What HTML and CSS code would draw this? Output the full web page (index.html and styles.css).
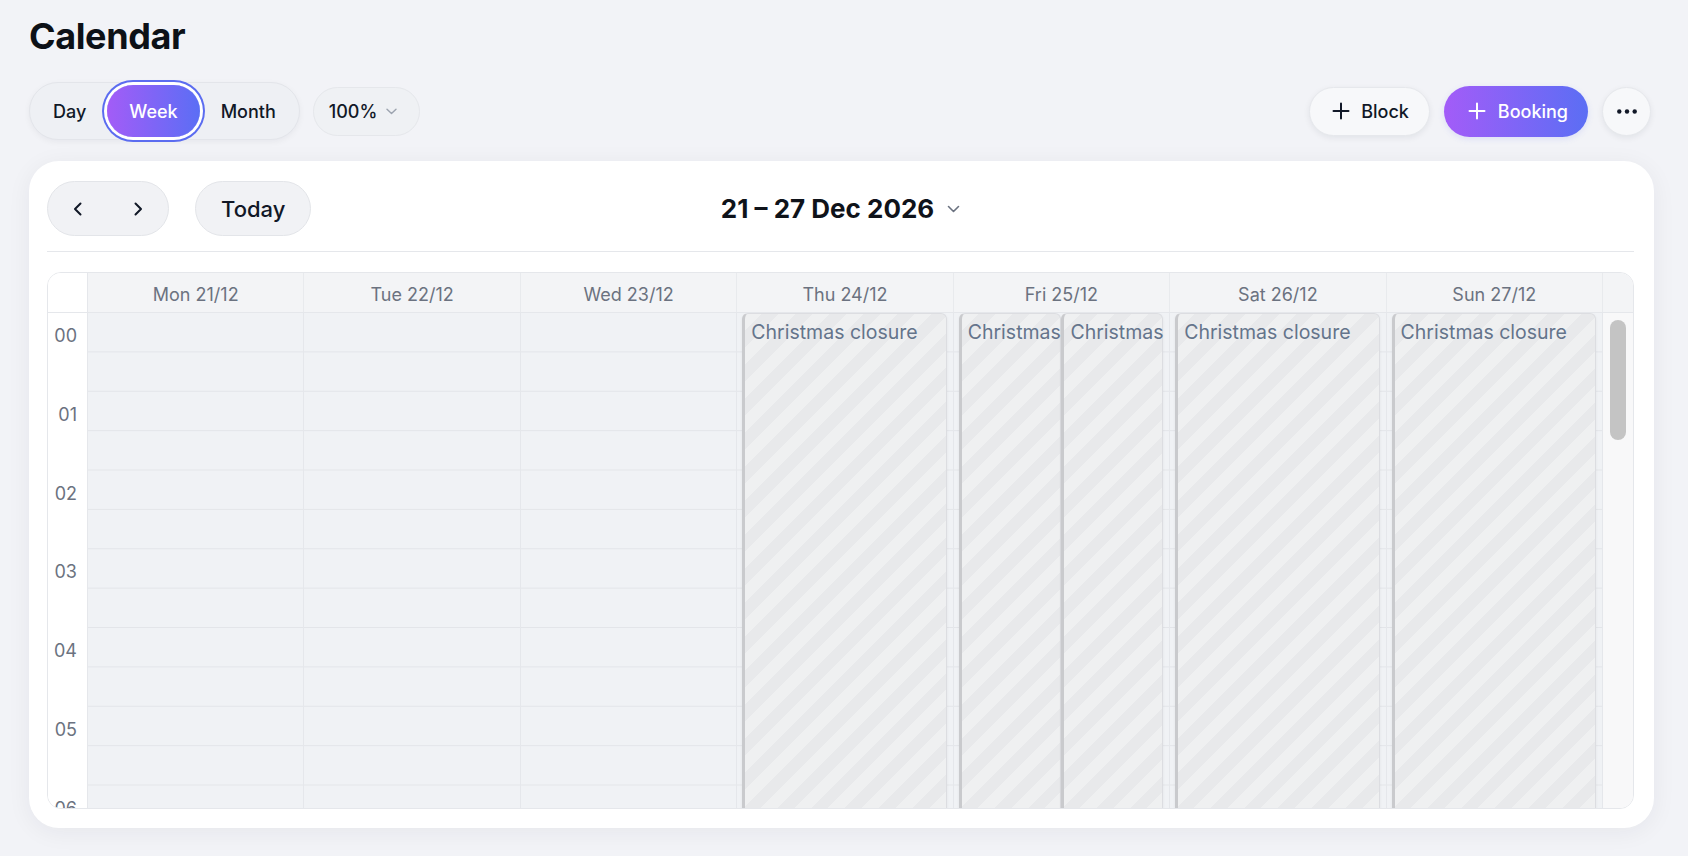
FILE: index.html
```html
<!DOCTYPE html>
<html lang="en">
<head>
  <meta charset="UTF-8">
  <meta name="viewport" content="width=device-width, initial-scale=1.0">
  <title>Calendar</title>
  <link rel="stylesheet" href="styles.css">
</head>
<body>
  <h1>Calendar</h1>

  <div class="toolbar">
    <div class="left-tools">
      <div class="view-switch">
        <button class="view-btn">Day</button>
        <button class="view-btn active">Week</button>
        <button class="view-btn">Month</button>
      </div>
      <button class="zoom-btn">100%
        <svg width="11" height="7" viewBox="0 0 11 7"><path d="M1 1.2 L5.5 5.5 L10 1.2" fill="none" stroke="#9ca3af" stroke-width="1.4" stroke-linecap="round" stroke-linejoin="round"/></svg>
      </button>
    </div>
    <div class="right-tools">
      <button class="block-btn">
        <svg width="18" height="18" viewBox="0 0 18 18"><path d="M9 1.5v15M1.5 9h15" stroke="#111827" stroke-width="2" stroke-linecap="round"/></svg>
        Block
      </button>
      <button class="booking-btn">
        <svg width="18" height="18" viewBox="0 0 18 18"><path d="M9 1.5v15M1.5 9h15" stroke="#fff" stroke-width="2" stroke-linecap="round"/></svg>
        Booking
      </button>
      <button class="more-btn">
        <svg width="20" height="5" viewBox="0 0 20 5"><circle cx="2.3" cy="2.5" r="2.2"/><circle cx="10" cy="2.5" r="2.2"/><circle cx="17.7" cy="2.5" r="2.2"/></svg>
      </button>
    </div>
  </div>

  <div class="card">
    <div class="card-head">
      <div class="head-left">
        <div class="nav-pill">
          <button class="nav-btn"><svg width="10" height="14" viewBox="0 0 10 14"><path d="M7.5 1.5 L2 7 L7.5 12.5" fill="none" stroke="#111827" stroke-width="2" stroke-linecap="round" stroke-linejoin="round"/></svg></button>
          <button class="nav-btn"><svg width="10" height="14" viewBox="0 0 10 14"><path d="M2.5 1.5 L8 7 L2.5 12.5" fill="none" stroke="#111827" stroke-width="2" stroke-linecap="round" stroke-linejoin="round"/></svg></button>
        </div>
        <button class="today-btn">Today</button>
      </div>
      <button class="range-title">21 – 27 Dec 2026
        <svg width="13" height="8" viewBox="0 0 13 8"><path d="M1.5 1.5 L6.5 6.5 L11.5 1.5" fill="none" stroke="#6b7280" stroke-width="1.6" stroke-linecap="round" stroke-linejoin="round"/></svg>
      </button>
      <div></div>
    </div>

    <div class="grid">
      <div class="grid-head">
        <div class="corner"></div>
        <div class="day-name">Mon 21/12</div>
        <div class="day-name">Tue 22/12</div>
        <div class="day-name">Wed 23/12</div>
        <div class="day-name">Thu 24/12</div>
        <div class="day-name">Fri 25/12</div>
        <div class="day-name">Sat 26/12</div>
        <div class="day-name">Sun 27/12</div>
      </div>
      <div class="grid-body">
        <div class="scroll-area">
          <div class="times">
            <div class="hour">00</div><div class="hour">01</div><div class="hour">02</div><div class="hour">03</div>
            <div class="hour">04</div><div class="hour">05</div><div class="hour">06</div><div class="hour">07</div>
            <div class="hour">08</div><div class="hour">09</div><div class="hour">10</div><div class="hour">11</div>
            <div class="hour">12</div><div class="hour">13</div><div class="hour">14</div><div class="hour">15</div>
            <div class="hour">16</div><div class="hour">17</div><div class="hour">18</div><div class="hour">19</div>
            <div class="hour">20</div><div class="hour">21</div><div class="hour">22</div><div class="hour">23</div>
          </div>
          <div class="day"></div>
          <div class="day"></div>
          <div class="day"></div>
          <div class="day">
            <div class="closure">Christmas closure</div>
          </div>
          <div class="day">
            <div class="closure first-half">Christmas closure</div>
            <div class="closure second-half">Christmas Day</div>
          </div>
          <div class="day">
            <div class="closure">Christmas closure</div>
          </div>
          <div class="day">
            <div class="closure">Christmas closure</div>
          </div>
        </div>
        <div class="scroll-rail">
          <div class="scroll-thumb"></div>
        </div>
      </div>
    </div>
  </div>
</body>
</html>
```

FILE: styles.css
```css
body {
  margin: 0;
  height: 100vh;
  box-sizing: border-box;
  padding: 14px 34px 28px 29px;
  background-color: #f2f3f7;
  font-family: Inter, "Noto Sans", sans-serif;
  color: #111827;
  display: flex;
  flex-direction: column;
}
button {
  font-family: inherit;
  cursor: pointer;
}
h1 {
  margin: 0;
  font-size: 36px;
  line-height: 44px;
  font-weight: 700;
  letter-spacing: -0.4px;
  color: #0d1117;
}

/* top toolbar */
.toolbar {
  display: flex;
  justify-content: space-between;
  align-items: center;
  margin-top: 24px;
}
.left-tools {
  display: flex;
  align-items: center;
  gap: 13px;
}
.view-switch {
  display: flex;
  padding: 2px;
  border: 1px solid #e3e5ea;
  border-radius: 999px;
  background-color: #eef0f4;
  box-shadow: 0 2px 6px rgba(15, 23, 42, 0.05);
}
.view-btn {
  height: 52px;
  padding: 0 21px;
  border: none;
  border-radius: 999px;
  background: none;
  font-size: 18px;
  font-weight: 500;
  color: #111827;
}
.view-btn.active {
  padding: 0 22px;
  background: linear-gradient(90deg, #a35cf7, #5b6ef5);
  color: #fff;
  box-shadow: 0 0 0 3px #fff, 0 0 0 5px #5b6cf0;
}
.zoom-btn {
  display: flex;
  align-items: center;
  gap: 9px;
  height: 49px;
  padding: 0 22px 0 15px;
  border: 1px solid #e5e7eb;
  border-radius: 999px;
  background-color: #eff1f4;
  font-size: 18px;
  font-weight: 500;
  color: #111827;
}
.right-tools {
  display: flex;
  align-items: center;
  gap: 14px;
  padding-right: 3px;
}
.block-btn,
.booking-btn {
  display: flex;
  align-items: center;
  border-radius: 999px;
  font-size: 18px;
  font-weight: 500;
}
.block-btn {
  gap: 11px;
  height: 49px;
  padding: 0 20px 0 22px;
  border: 1px solid #e6e8ec;
  background-color: #f7f8fa;
  color: #111827;
  box-shadow: 0 2px 6px rgba(15, 23, 42, 0.07);
}
.booking-btn {
  gap: 12px;
  height: 51px;
  padding: 0 20px 0 24px;
  border: none;
  background: linear-gradient(90deg, #a35cf8, #5b6ef4);
  color: #fff;
  box-shadow: 0 2px 6px rgba(91, 110, 244, 0.15);
}
.more-btn {
  width: 49px;
  height: 49px;
  padding: 0;
  display: flex;
  align-items: center;
  justify-content: center;
  border: 1px solid #e6e8ec;
  border-radius: 50%;
  background-color: #f7f8fa;
  fill: #111827;
  box-shadow: 0 2px 6px rgba(15, 23, 42, 0.07);
}

/* calendar card */
.card {
  flex: 1;
  min-height: 0;
  margin-top: 21px;
  padding: 20px 20px 19px 18px;
  background-color: #fff;
  border-radius: 30px;
  box-shadow: 0 4px 24px rgba(30, 41, 59, 0.06);
  display: flex;
  flex-direction: column;
}
.card-head {
  display: grid;
  grid-template-columns: 1fr auto 1fr;
  align-items: center;
  padding-bottom: 15px;
  border-bottom: 1px solid #e5e7eb;
}
.head-left {
  display: flex;
  align-items: center;
  gap: 26px;
}
.nav-pill {
  display: flex;
  height: 55px;
  box-sizing: border-box;
  border: 1px solid #e3e5e9;
  border-radius: 999px;
  background-color: #f1f2f5;
}
.nav-btn {
  width: 60px;
  border: none;
  background: none;
  display: flex;
  align-items: center;
  justify-content: center;
}
.today-btn {
  height: 55px;
  padding: 0 25px;
  border: 1px solid #e3e5e9;
  border-radius: 999px;
  background-color: #f1f2f5;
  font-size: 22px;
  font-weight: 500;
  color: #111827;
}
.range-title {
  display: flex;
  align-items: center;
  gap: 13px;
  border: none;
  background: none;
  padding: 0;
  font-size: 26px;
  font-weight: 700;
  color: #0f131a;
}

/* week grid */
.grid {
  flex: 1;
  min-height: 0;
  margin-top: 20px;
  border: 1px solid #e5e7eb;
  border-radius: 14px;
  overflow: hidden;
  display: flex;
  flex-direction: column;
}
.grid-head {
  display: grid;
  grid-template-columns: 40px repeat(7, 1fr);
  height: 40px;
  box-sizing: border-box;
  padding-right: 30px;
  background-color: #f3f4f6;
  border-bottom: 1px solid #e5e7eb;
}
.corner {
  background-color: #fff;
  border-right: 1px solid #e5e7eb;
}
.day-name {
  display: flex;
  align-items: center;
  justify-content: center;
  padding-top: 3px;
  border-right: 1px solid #e8eaed;
  font-size: 18px;
  color: #6b7280;
}
.grid-body {
  flex: 1;
  min-height: 0;
  display: flex;
}
.scroll-area {
  flex: 1;
  min-width: 0;
  overflow: hidden;
  display: grid;
  grid-template-columns: 40px repeat(7, 1fr);
  align-items: start;
}
.scroll-rail {
  width: 30px;
  box-sizing: border-box;
  padding: 7px 7px 0;
  background-color: #f8f8f9;
}
.scroll-thumb {
  height: 120px;
  border-radius: 8px;
  background-color: #c4c4c4;
}
.times {
  background-color: #fff;
  border-right: 1px solid #e5e7eb;
}
.hour {
  height: 78.75px;
  box-sizing: border-box;
  padding: 12px 10px 0 0;
  text-align: right;
  font-size: 18px;
  line-height: 22px;
  color: #6b7280;
}
.day {
  position: relative;
  height: 1890px;
  border-right: 1px solid #e5e7eb;
  background-color: #f0f2f5;
  background-image: linear-gradient(to top, #e3e5e9 1px, transparent 1px);
  background-size: 100% 39.375px;
}
.closure {
  position: absolute;
  top: 0;
  bottom: 0;
  left: 5px;
  right: 6px;
  padding: 6px 6px;
  border: 1px solid #dcdde1;
  border-left: 3px solid #c9cacd;
  border-radius: 6px;
  background: repeating-linear-gradient(135deg, #eff0f1 0 12px, #e8e9eb 12px 24px);
  box-shadow: 0 1px 3px rgba(0, 0, 0, 0.06);
  white-space: nowrap;
  font-size: 19.5px;
  line-height: 24px;
  color: #64748b;
}
.closure.first-half {
  right: 50%;
}
.closure.second-half {
  left: 50%;
}
```
